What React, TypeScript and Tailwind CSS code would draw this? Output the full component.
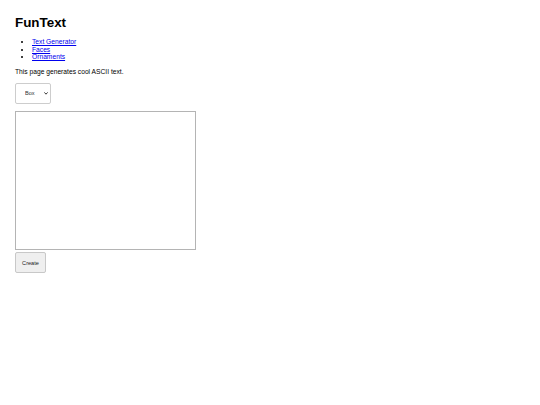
const links = ['Text Generator', 'Faces', 'Ornaments'];

export default function App() {
  return (
    <div className="min-h-screen bg-white pl-[15px] pt-[15px] text-black font-['Liberation_Sans',Arial,sans-serif]">
      <h1 className="text-[13.4px] leading-[15.4px] font-bold">FunText</h1>

      <ul className="mt-[7.6px] list-disc pl-[17px] text-[6.7px] leading-[7.7px]">
        {links.map((label) => (
          <li key={label}>
            <a href="#" className="text-[#0000ee] underline">
              {label}
            </a>
          </li>
        ))}
      </ul>

      <p className="mt-[6.4px] text-[6.7px] leading-[7.7px]">This page generates cool ASCII text.</p>

      <div className="relative mt-[8px] w-[36px] h-[21px]">
        <select className="block appearance-none w-full h-full bg-white border border-[#cdcdcd] rounded-[2px] pl-[9px] text-[5.6px] leading-none text-[#333] outline-none">
          <option>Box</option>
          <option>Banner</option>
          <option>Frame</option>
        </select>
        <svg
          className="pointer-events-none absolute right-[3px] top-[9px]"
          width="4"
          height="3"
          viewBox="0 0 4 3"
        >
          <path d="M0.4 0.4 L2 2.2 L3.6 0.4" fill="none" stroke="#222" strokeWidth="0.9" />
        </svg>
      </div>

      <textarea className="block mt-[7px] w-[181px] h-[139px] border border-[#b4b4b4] bg-white resize-none outline-none text-[6.7px]" />

      <button className="block mt-[2px] w-[31px] h-[21px] bg-[#efefef] border border-[#c8c8c8] rounded-[2px] text-[5.6px] text-[#222]">
        Create
      </button>
    </div>
  );
}
